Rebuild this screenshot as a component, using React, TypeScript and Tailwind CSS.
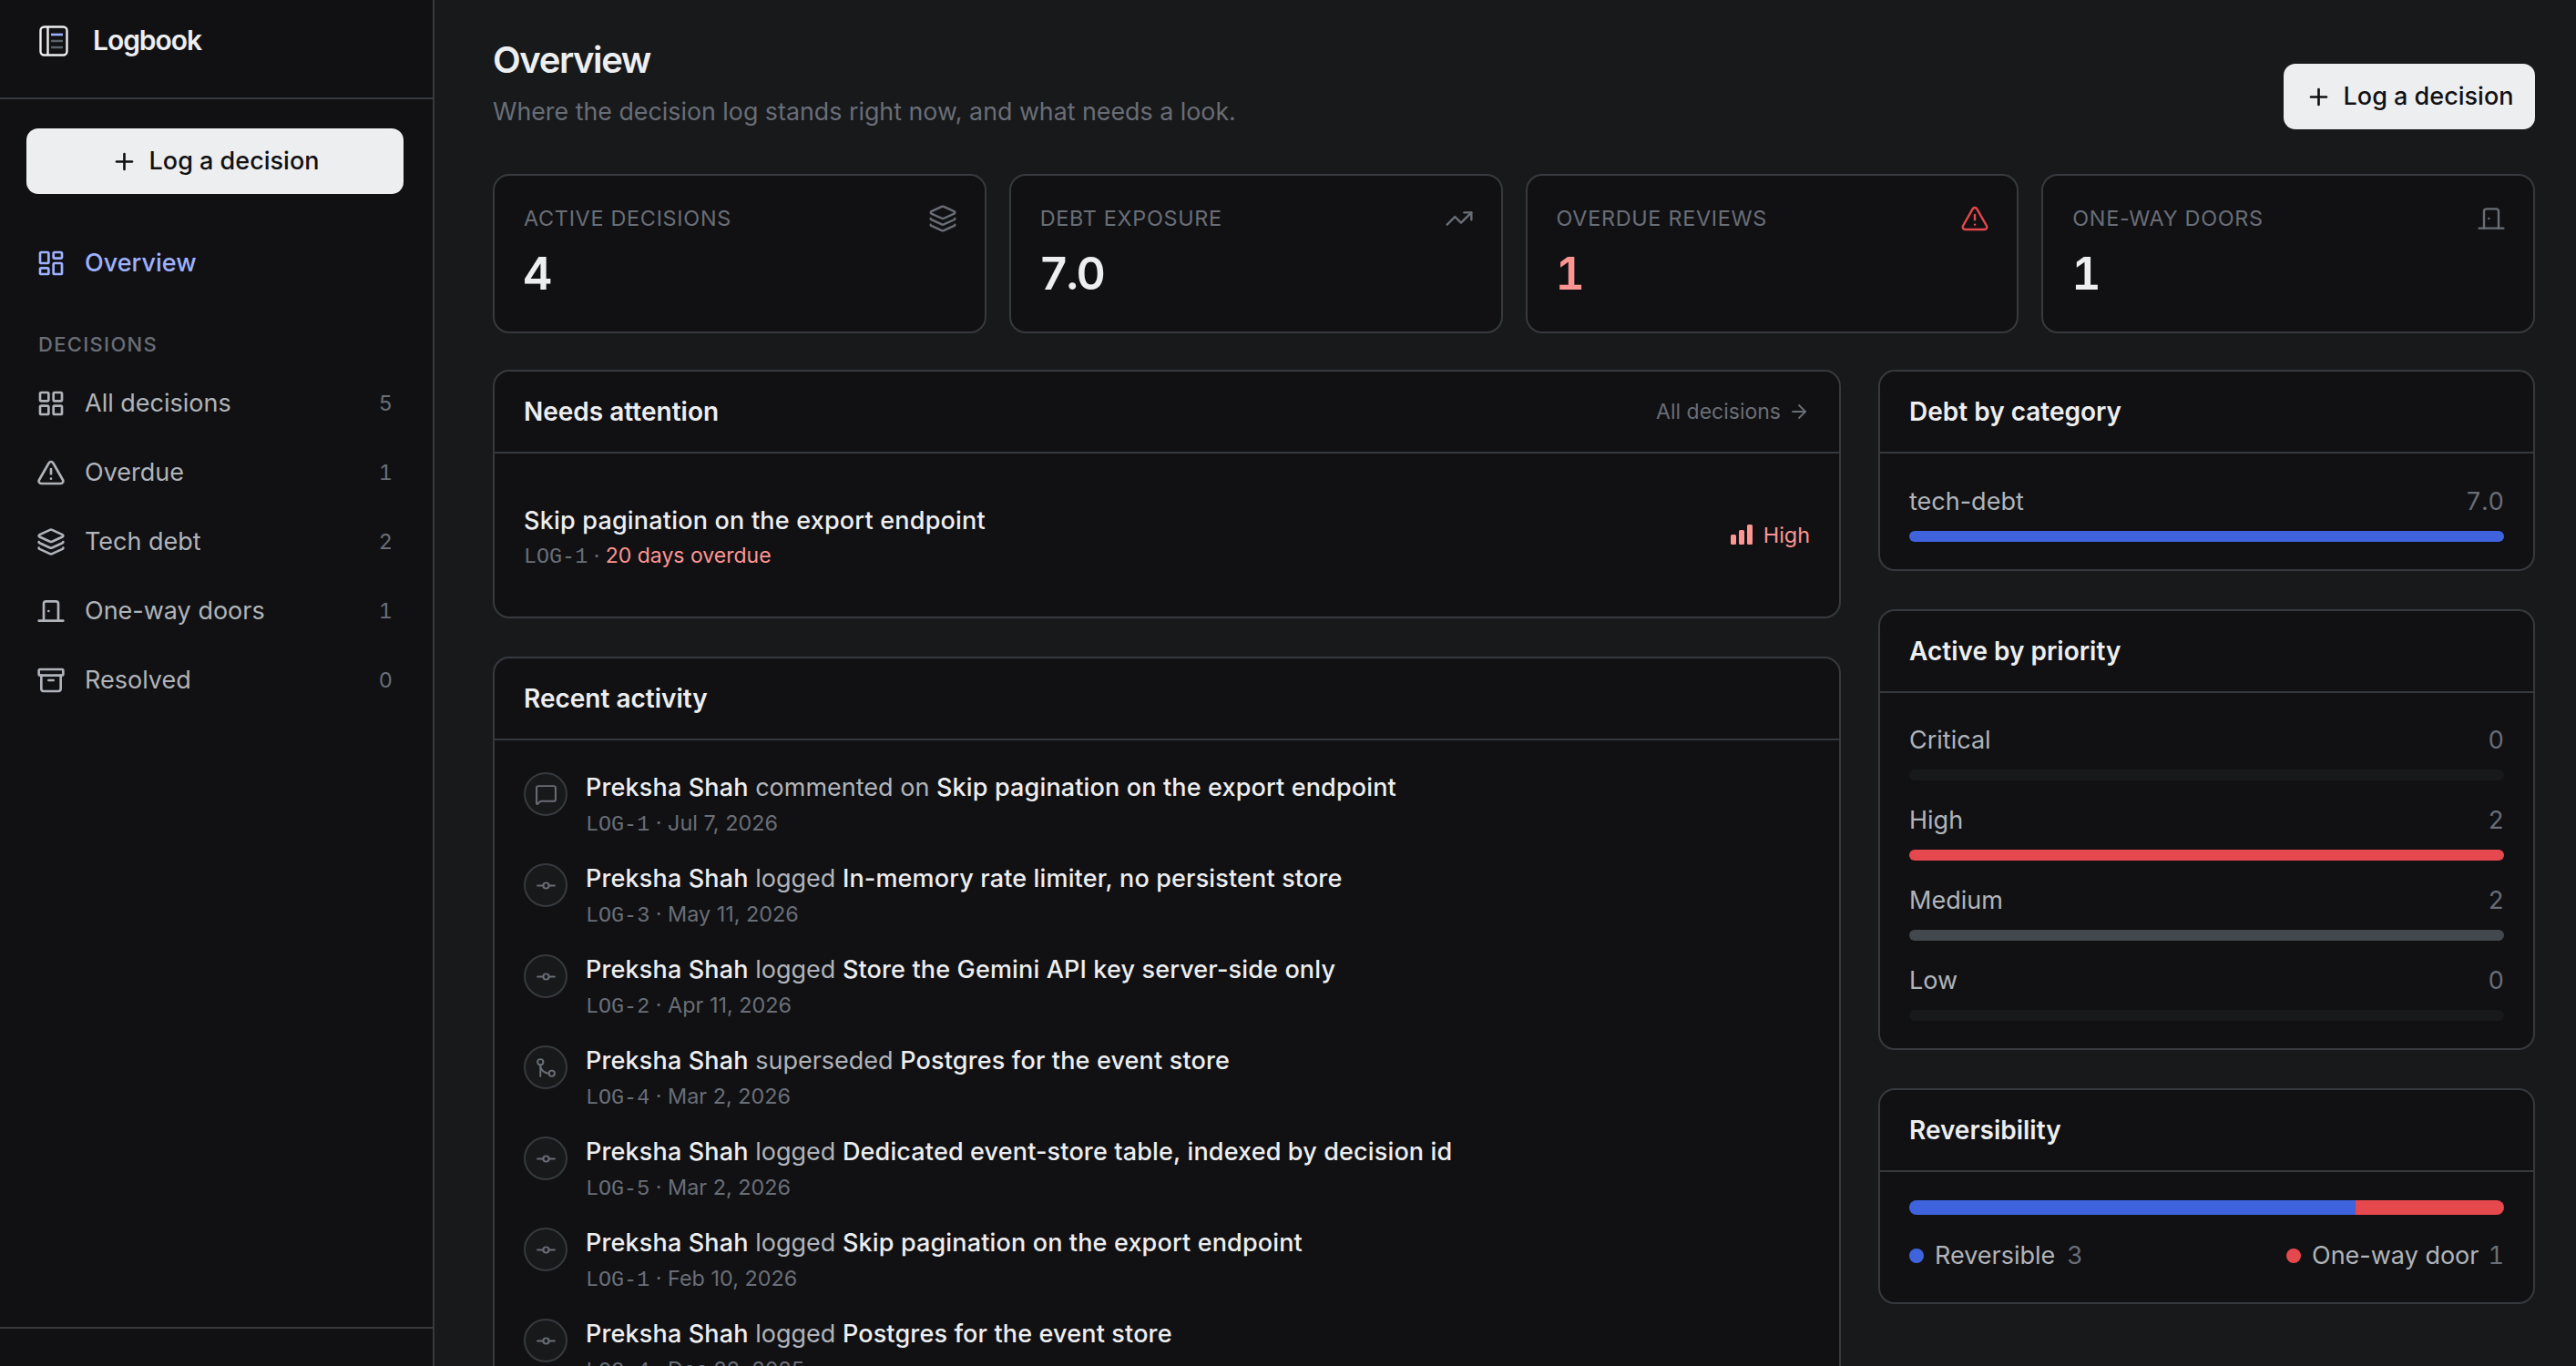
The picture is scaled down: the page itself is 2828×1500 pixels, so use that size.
import React from "react";
import {
  LayoutDashboard, LayoutGrid, TriangleAlert, Layers, DoorClosed, Archive, TrendingUp,
  Plus, ArrowRight, MessageSquare, GitCommitHorizontal, GitMerge,
} from "lucide-react";

const Logo = () => (
  <svg width="32" height="34" viewBox="0 0 32 34" fill="none" className="shrink-0">
    <rect x="1.500" y="1.500" width="29" height="31" rx="4" stroke="#edeef0" strokeWidth="2.4" />
    <path d="M9.500 2v30" stroke="#edeef0" strokeWidth="2.4" />
    <path d="M13 10h13" stroke="#9eb1ff" strokeWidth="2.6" />
    <path d="M13 17h13M13 24h13" stroke="#5a6169" strokeWidth="2.6" />
  </svg>
);

const Primary = ({ className }: { className: string }) => (
  <button className={`flex h-[72px] items-center justify-center gap-[13px] rounded-[13px] bg-[#edeef0] text-[27px] font-medium text-[#111113] ${className}`}>
    <Plus size={29} strokeWidth={2.2} />
    <span>Log a decision</span>
  </button>
);

const nav = [
  { icon: LayoutGrid, label: "All decisions", n: 5 },
  { icon: TriangleAlert, label: "Overdue", n: 1 },
  { icon: Layers, label: "Tech debt", n: 2 },
  { icon: DoorClosed, label: "One-way doors", n: 1 },
  { icon: Archive, label: "Resolved", n: 0 },
];

const Sidebar = () => (
  <aside className="flex h-full w-[477px] shrink-0 flex-col border-r-2 border-[#363a3f] bg-[#111113]">
    <div className="flex h-[109px] shrink-0 items-center gap-[27px] border-b-2 border-[#363a3f] pb-[18px] pl-[43px]">
      <Logo />
      <span className="text-[30px] font-semibold tracking-[-0.035em] text-[#edeef0]">Logbook</span>
    </div>
    <div className="px-[29px] pt-[32px]">
      <Primary className="w-[414px]" />
    </div>
    <div className="mt-[38px] flex h-[76px] items-center gap-[21px] pl-[40px] text-[27px] font-medium text-[#9eb1ff]">
      <LayoutDashboard size={32} />
      <span>Overview</span>
    </div>
    <div className="mt-[36px] pl-[42px] text-[22px] font-medium leading-[30px] tracking-[0.06em] text-[#696e77]">DECISIONS</div>
    <div className="mt-[12px] flex flex-col">
      {nav.map((r) => (
        <div key={r.label} className="flex h-[76px] items-center gap-[21px] pl-[40px] pr-[44px] text-[27px] text-[#b0b4ba]">
          <r.icon size={32} />
          <span className="flex-1">{r.label}</span>
          <span className="text-[23.4px] tabular-nums text-[#696e77]">{r.n}</span>
        </div>
      ))}
    </div>
    <div className="mt-auto h-[43px] shrink-0 border-t-2 border-[#363a3f]" />
  </aside>
);

const Stat = ({ label, value, icon: I, iconC, valC }: { label: string; value: string; icon: any; iconC: string; valC: string }) => (
  <div className="flex h-[175px] flex-col rounded-[18px] border-2 border-[#363a3f] bg-[#111113] px-[32px] pt-[29px]">
    <div className="flex items-center justify-between">
      <span className="text-[23.4px] font-normal uppercase leading-[36px] tracking-[0.03em] text-[#696e77]">{label}</span>
      <I size={32} strokeWidth={1.8} className={`-mr-[2px] ${iconC}`} />
    </div>
    <div className={`-ml-[1px] mt-[12px] text-[50px] font-semibold leading-[60px] tracking-[-0.05em] tabular-nums ${valC}`}>{value}</div>
  </div>
);

const Card = ({ title, right, children, className = "" }: { title: string; right?: React.ReactNode; children: React.ReactNode; className?: string }) => (
  <section className={`rounded-[18px] border-2 border-[#363a3f] bg-[#111113] ${className}`}>
    <div className="flex h-[90px] items-center justify-between border-b-2 border-[#363a3f] px-[32px]">
      <h2 className="text-[28px] font-semibold text-[#edeef0]">{title}</h2>
      {right}
    </div>
    {children}
  </section>
);

const activity = [
  { icon: MessageSquare, verb: "commented on", t: "Skip pagination on the export endpoint", m: "LOG-1", d: "Jul 7, 2026" },
  { icon: GitCommitHorizontal, verb: "logged", t: "In-memory rate limiter, no persistent store", m: "LOG-3", d: "May 11, 2026" },
  { icon: GitCommitHorizontal, verb: "logged", t: "Store the Gemini API key server-side only", m: "LOG-2", d: "Apr 11, 2026" },
  { icon: GitMerge, verb: "superseded", t: "Postgres for the event store", m: "LOG-4", d: "Mar 2, 2026" },
  { icon: GitCommitHorizontal, verb: "logged", t: "Dedicated event-store table, indexed by decision id", m: "LOG-5", d: "Mar 2, 2026" },
  { icon: GitCommitHorizontal, verb: "logged", t: "Skip pagination on the export endpoint", m: "LOG-1", d: "Feb 10, 2026" },
  { icon: GitCommitHorizontal, verb: "logged", t: "Postgres for the event store", m: "LOG-4", d: "Dec 22, 2025" },
];

const Mono = ({ children }: { children: React.ReactNode }) => (
  <span className="font-['Liberation_Mono',monospace] text-[23.4px]">{children}</span>
);

const Row = ({ a }: { a: (typeof activity)[number] }) => (
  <div className="flex h-[100px] gap-[20px]">
    <div className="mt-[2px] flex size-[48px] shrink-0 items-center justify-center rounded-full border-2 border-[#363a3f] bg-[#18191b] text-[#696e77]">
      <a.icon size={25} strokeWidth={1.9} />
    </div>
    <div>
      <div className="text-[27px] leading-[38px] text-[#b0b4ba]">
        <span className="font-medium tracking-[0.15px] text-[#edeef0]">Preksha Shah</span> {a.verb}{" "}
        <span className="font-medium tracking-[0.15px] text-[#edeef0]">{a.t}</span>
      </div>
      <div className="text-[23.4px] leading-[39px] text-[#696e77]">
        <Mono>{a.m}</Mono> · {a.d}
      </div>
    </div>
  </div>
);

const Bar = ({ label, val, color }: { label: string; val: string; color?: string }) => (
  <div className="h-[88px] pt-[14px]">
    <div className="flex items-center justify-between text-[27px] leading-[36px]">
      <span className="text-[#b0b4ba]">{label}</span>
      <span className="tabular-nums text-[#696e77]">{val}</span>
    </div>
    <div className={`mt-[14px] h-[12px] rounded-full ${color ?? "bg-[#18191b]"}`} />
  </div>
);

export default function App() {
  return (
    <div className="flex h-[1500px] w-full overflow-hidden bg-[#18191b] font-['Inter',sans-serif]">
      <Sidebar />
      <main className="min-w-0 flex-1 overflow-hidden pl-[64px] pr-[45px]">
        <div className="flex h-[191px] items-start justify-between">
          <div className="pt-[40px]">
            <h1 className="text-[40px] font-semibold leading-[52px] tracking-[-0.035em] text-[#edeef0]">Overview</h1>
            <p className="mt-[11px] text-[26.800px] leading-[38px] text-[#696e77]">Where the decision log stands right now, and what needs a look.</p>
          </div>
          <Primary className="mt-[70px] w-[276px]" />
        </div>
        <div className="grid grid-cols-4 gap-[25px]">
          <Stat label="Active decisions" value="4" icon={Layers} iconC="text-[#696e77]" valC="text-[#edeef0]" />
          <Stat label="Debt exposure" value="7.0" icon={TrendingUp} iconC="text-[#696e77]" valC="text-[#edeef0]" />
          <Stat label="Overdue reviews" value="1" icon={TriangleAlert} iconC="text-[#e5484d]" valC="text-[#ff9592]" />
          <Stat label="One-way doors" value="1" icon={DoorClosed} iconC="text-[#696e77]" valC="text-[#edeef0]" />
        </div>
        <div className="mt-[40px] grid grid-cols-[1480px_721px] gap-x-[41px]">
          <div className="flex flex-col gap-[42px]">
            <Card
              title="Needs attention"
              right={
                <span className="flex items-center gap-[8px] text-[23px] text-[#696e77]">
                  All decisions <ArrowRight size={24} strokeWidth={1.8} />
                </span>
              }
            >
              <div className="flex h-[179px] items-center justify-between px-[32px]">
                <div className="mt-[8px]">
                  <div className="text-[27px] font-medium leading-[38px] tracking-[0.2px] text-[#edeef0]">Skip pagination on the export endpoint</div>
                  <div className="text-[23px] leading-[38px] text-[#696e77]">
                    <Mono>LOG-1</Mono> · <span className="text-[#ff9592]">20 days overdue</span>
                  </div>
                </div>
                <span className="flex items-center gap-[12px] text-[23.4px] text-[#ff9592]">
                  <svg width="24" height="22" viewBox="0 0 24 22" fill="currentColor">
                    <rect x="0" y="11" width="6" height="11" rx="1.500" />
                    <rect x="9" y="6" width="6" height="16" rx="1.500" />
                    <rect x="18" y="0" width="6" height="22" rx="1.500" />
                  </svg>
                  High
                </span>
              </div>
            </Card>
            <Card title="Recent activity" className="min-h-[800px]">
              <div className="px-[32px] pt-[33px]">
                {activity.map((a, i) => (
                  <Row key={i} a={a} />
                ))}
              </div>
            </Card>
          </div>
          <div className="flex flex-col gap-[42px]">
            <Card title="Debt by category">
              <div className="h-[127px] px-[32px] pt-[21px]">
                <Bar label="tech-debt" val="7.0" color="bg-[#3e63dd]" />
              </div>
            </Card>
            <Card title="Active by priority">
              <div className="px-[32px] pb-[18px] pt-[20px]">
                <Bar label="Critical" val="0" />
                <Bar label="High" val="2" color="bg-[#e5484d]" />
                <Bar label="Medium" val="2" color="bg-[#43484e]" />
                <Bar label="Low" val="0" />
              </div>
            </Card>
            <Card title="Reversibility">
              <div className="h-[143px] px-[32px] pt-[31px]">
                <div className="flex h-[16px] overflow-hidden rounded-full">
                  <div className="w-3/4 bg-[#3e63dd]" />
                  <div className="w-1/4 bg-[#e5484d]" />
                </div>
                <div className="mt-[26px] flex items-center justify-between text-[27px] leading-[38px] text-[#b0b4ba]">
                  <span className="flex items-center">
                    <i className="mr-[12px] size-[16px] rounded-full bg-[#3e63dd]" />Reversible
                    <span className="ml-[13px] text-[#696e77] tabular-nums">3</span>
                  </span>
                  <span className="flex items-center">
                    <i className="mr-[12px] size-[16px] rounded-full bg-[#e5484d]" />One-way door
                    <span className="ml-[10px] text-[#696e77] tabular-nums">1</span>
                  </span>
                </div>
              </div>
            </Card>
          </div>
        </div>
      </main>
    </div>
  );
}
